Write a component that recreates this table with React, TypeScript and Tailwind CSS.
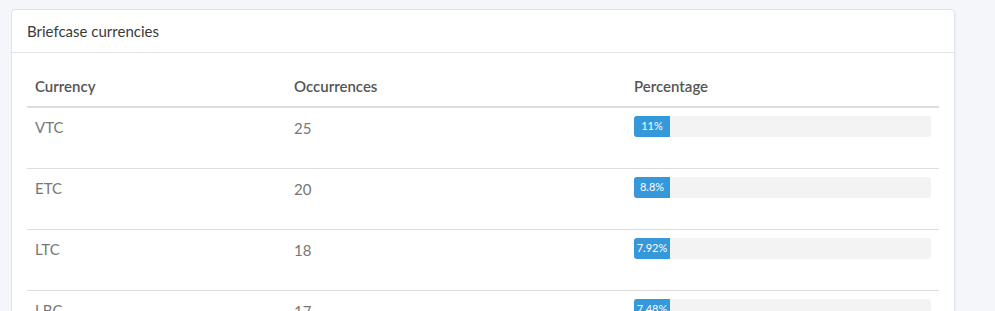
const rows = [
  { currency: "VTC", count: 25, pct: "11%" },
  { currency: "ETC", count: 20, pct: "8.8%" },
  { currency: "LTC", count: 18, pct: "7.92%" },
  { currency: "LBC", count: 17, pct: "7.48%" },
];

export default function App() {
  return (
    <div
      className="h-[311px] overflow-hidden bg-[#f4f6f9] pl-[11px] pr-[40px] pt-[9px]"
      style={{ fontFamily: "Lato, 'Open Sans', sans-serif" }}
    >
      <div className="rounded-[4px] border border-[#e0e4e8] bg-white shadow-[1px_1px_2px_rgba(0,0,0,0.04)]">
        <div className="flex h-[43px] items-center border-b border-[#e0e4e8] px-[15px] text-[15px] text-[#3a3a3a]">
          Briefcase currencies
        </div>
        <div className="px-[15px] pt-[16px]">
          <table className="w-full table-fixed border-collapse text-[15px]">
            <colgroup>
              <col className="w-[259px]" />
              <col className="w-[340px]" />
              <col />
            </colgroup>
            <thead>
              <tr className="border-b-2 border-[#dddddd] text-left text-[#555]">
                <th className="h-[38px] px-2 pb-[3px] font-semibold">Currency</th>
                <th className="h-[38px] px-2 pb-[3px] font-semibold">Occurrences</th>
                <th className="h-[38px] px-2 pb-[3px] font-semibold">Percentage</th>
              </tr>
            </thead>
            <tbody>
              {rows.map((r, i) => (
                <tr key={r.currency} className={i > 0 ? "border-t border-[#dddddd]" : ""}>
                  <td className="h-[61px] px-2 pt-[9px] align-top leading-[20px] text-[#777]">{r.currency}</td>
                  <td className="h-[61px] px-2 pt-[10px] align-top leading-[20px] text-[#777]">{r.count}</td>
                  <td className="h-[61px] px-2 pt-[8px] align-top">
                    <div className="flex h-[21px] overflow-hidden rounded-[3px] bg-[#f3f3f3]">
                      <div className="flex w-[36px] items-center justify-center bg-[#3498db] text-[11px] text-white">
                        {r.pct}
                      </div>
                    </div>
                  </td>
                </tr>
              ))}
            </tbody>
          </table>
        </div>
      </div>
    </div>
  );
}
